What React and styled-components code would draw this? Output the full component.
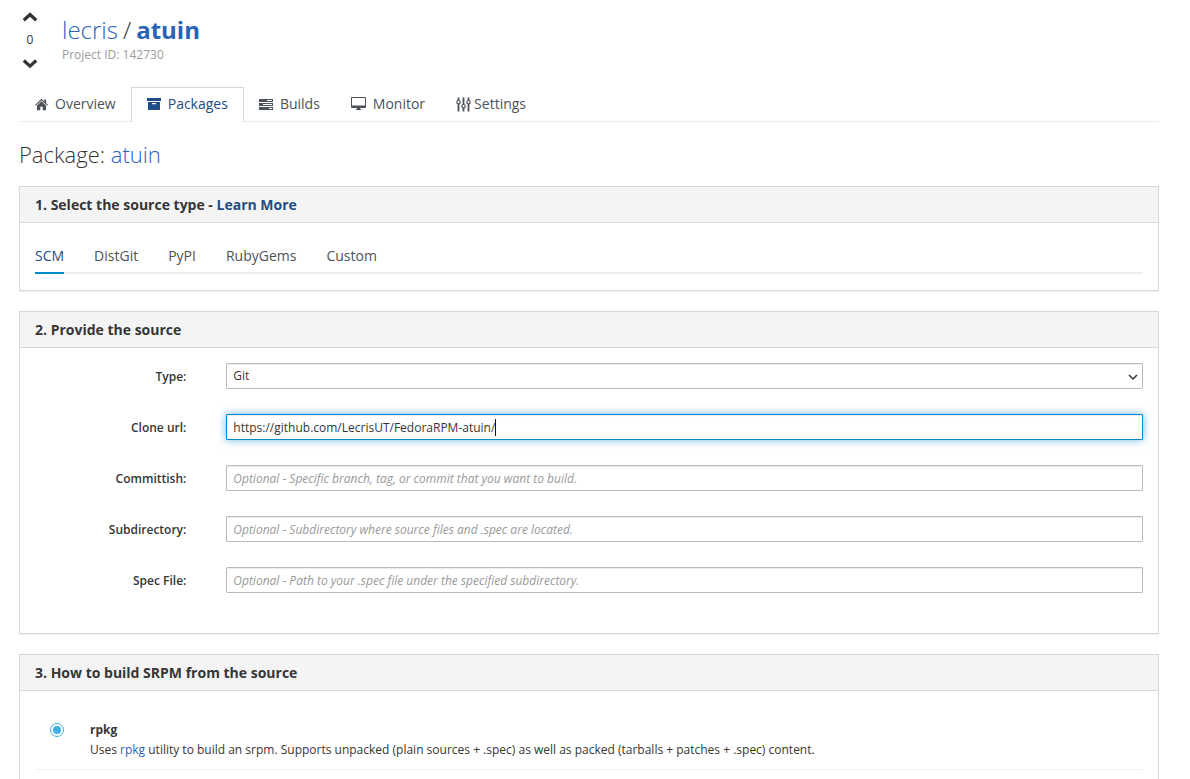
import React from 'react'
import styled, { createGlobalStyle, css } from 'styled-components'

const colors = {
    text: '#363636',
    muted: '#9c9c9c',
    tab: '#4d5258',
    link: '#2a62b8',
    active: '#204d88',
    accent: '#0088ce',
    border: '#d8d8d8',
    line: '#ededed',
}

const GlobalStyle = createGlobalStyle`
    * {
        box-sizing: border-box;
    }
    body {
        margin: 0;
        background: #fff;
        color: ${colors.text};
        font-family: 'Open Sans', 'Noto Sans', sans-serif;
        font-size: 12px;
        line-height: 20px;
    }
    a {
        color: ${colors.link};
        text-decoration: none;
        &:hover {
            text-decoration: underline;
        }
    }
`

const Page = styled.main`
    height: 100vh;
    overflow: hidden;
    padding: 10px 31px 0 19px;
`

const Header = styled.header`
    display: flex;
    gap: 24px;
    height: 77px;
    padding-left: 3px;
`

const Votes = styled.div`
    display: flex;
    flex-direction: column;
    align-items: center;
    width: 16px;
`

const VoteButton = styled.button`
    display: block;
    padding: 0;
    border: 0;
    background: none;
    color: #333;
    cursor: pointer;
    svg {
        display: block;
        width: 16px;
        height: 14px;
    }
`

const VoteCount = styled.span`
    padding: 6px 0;
`

const Title = styled.h1`
    display: flex;
    gap: 5px;
    margin: 4px 0 0;
    font-size: 24px;
    font-weight: 300;
    line-height: 32px;
    a:last-child {
        font-weight: 700;
    }
`

const ProjectId = styled.div`
    line-height: 18px;
    color: ${colors.muted};
`

const NavTabs = styled.nav`
    display: flex;
    border-bottom: 1px solid ${colors.line};
`

const NavTab = styled.a`
    display: flex;
    align-items: center;
    gap: ${({ $gap }) => $gap || 7}px;
    height: 35px;
    margin: 0 -1px -1px 0;
    padding: 0 15px 2px;
    border: 1px solid transparent;
    border-bottom: 0;
    color: ${colors.tab};
    font-size: 14px;
    svg {
        flex: none;
    }
    ${({ $active }) => $active && css`
        border-color: ${colors.border};
        background: #fff;
        color: ${colors.active};
    `}
`

const PackageTitle = styled.h2`
    margin: 17px 0;
    font-size: 22px;
    font-weight: 300;
    line-height: 30px;
`

const Panel = styled.section`
    margin-bottom: 20px;
    border: 1px solid ${colors.border};
    box-shadow: 0 1px 1px rgba(0, 0, 0, 0.05);
`

const PanelHeading = styled.h3`
    margin: 0;
    padding: 8px 15px 7px;
    border-bottom: 1px solid ${colors.border};
    background: #f4f4f4;
    font-size: 14px;
    font-weight: 700;
    line-height: 20px;
    a {
        color: ${colors.active};
    }
`

const SourceBody = styled.div`
    padding: 15px 15px 16px;
`

const SourceTabs = styled.nav`
    display: flex;
    gap: 30px;
    border-bottom: 2px solid ${colors.line};
`

const SourceTab = styled.a`
    margin-bottom: -2px;
    padding: 8px 0 6px;
    border-bottom: 2px solid ${({ $active }) => $active ? colors.accent : 'transparent'};
    color: ${({ $active }) => $active ? colors.active : colors.tab};
    font-size: 14px;
`

const Form = styled.form`
    padding: 15px;
`

const FormRow = styled.div`
    display: flex;
    margin: 0 -20px 25px;
`

const Label = styled.label`
    flex: 0 0 calc(100% / 6);
    padding: 4px 20px 2px;
    font-weight: 600;
    text-align: right;
`

const Field = styled.div`
    position: relative;
    flex: 1;
    padding: 0 20px;
`

const control = css`
    display: block;
    width: 100%;
    height: 26px;
    margin: 0;
    padding: 2px 6px;
    border: 1px solid #bbb;
    border-radius: 1px;
    outline: 0;
    background: #fff;
    box-shadow: inset 0 1px 1px rgba(3, 3, 3, 0.075);
    color: ${colors.text};
    font-family: inherit;
    font-size: 12px;
    line-height: 20px;
    &:focus {
        border-color: ${colors.accent};
        box-shadow: inset 0 1px 1px rgba(3, 3, 3, 0.075), 0 0 8px rgba(0, 136, 206, 0.6);
    }
`

const Input = styled.input`
    ${control}
    caret-color: transparent;
    &::placeholder {
        color: #999;
        font-style: italic;
        opacity: 1;
    }
`

// steady caret, placed after an invisible copy of the value
const Caret = styled.span`
    position: absolute;
    top: 5px;
    left: 27px;
    line-height: 17px;
    white-space: pre;
    visibility: hidden;
    pointer-events: none;
    border-right: 1px solid transparent;
    &::after {
        content: '';
        position: absolute;
        top: 0;
        left: 100%;
        width: 1px;
        height: 17px;
        background: #111;
        visibility: visible;
    }
`

const Select = styled.select`
    ${control}
    appearance: none;
`

const SelectArrow = styled.svg`
    position: absolute;
    top: 10px;
    right: 25px;
    pointer-events: none;
`

const BuildBody = styled.div`
    padding: 15px 15px 300px;
`

const Option = styled.div`
    display: flex;
    gap: 26px;
    padding: 14px 15px 9px;
    border-bottom: 1px solid #f1f1f1;
`

const Radio = styled.input`
    appearance: none;
    flex: none;
    width: 14px;
    height: 14px;
    margin: 3px 0;
    border: 1px solid #3daee9;
    border-radius: 50%;
    background: #fff;
    &:checked {
        padding: 2px;
        background: #3daee9 content-box;
    }
`

const OptionName = styled.label`
    display: block;
    font-weight: 700;
`

const Chevron = ({ down }) => (
    <svg viewBox="0 0 16 14">
        <path
            d={down ? 'M1.8 4.5 8 10.2l6.2-5.7' : 'M1.8 10.2 8 4.5l6.2 5.7'}
            fill="none"
            stroke="currentColor"
            strokeWidth="3.2"
        />
    </svg>
)

const HomeIcon = () => (
    <svg width="13" height="13" viewBox="0 0 13 13" fill="currentColor">
        <path d="M6.5.8 0 7l.7.8 5.8-5.4 5.8 5.4.7-.8-2-1.9V1.4H9.2v2z" />
        <path d="M6.5 3.3 2 7.5v4.7h3.3V8.7h2.4v3.5H11V7.5z" />
    </svg>
)

const PackageIcon = () => (
    <svg width="14" height="14" viewBox="0 0 14 14" fill="currentColor">
        <path d="M0 1h14v3H0z" />
        <path fillRule="evenodd" d="M1 5h12v8H1zM5 6v1.2h4V6z" />
    </svg>
)

const BuildsIcon = () => (
    <svg width="14" height="13" viewBox="0 0 14 13" fill="currentColor">
        <path fillRule="evenodd" d="M0 1h14v3H0zM8 2v1h5V2z" />
        <path fillRule="evenodd" d="M0 5h14v3H0zM4 6v1h9V6z" />
        <path fillRule="evenodd" d="M0 9h14v3H0zM10 10v1h3v-1z" />
    </svg>
)

const MonitorIcon = () => (
    <svg width="15" height="14" viewBox="0 0 15 14" fill="currentColor">
        <path fillRule="evenodd" d="M1 0h13q1 0 1 1v9q0 1-1 1H1q-1 0-1-1V1q0-1 1-1zM1 1v7.500h13V1z" />
        <path d="M6 11h3v1h1v1H5v-1h1z" />
    </svg>
)

const SettingsIcon = () => (
    <svg width="15" height="15" viewBox="0 0 15 15" fill="none" stroke="currentColor">
        <path strokeWidth="1.800" d="M2.500.5v3M2.500 7v7.500M7.500.5v7M7.500 11v3.500M12.500.5v3M12.500 7v7.500" />
        <g strokeWidth="1.200">
            <circle cx="2.500" cy="5.200" r="1.700" />
            <circle cx="7.500" cy="9.200" r="1.700" />
            <circle cx="12.500" cy="5.200" r="1.700" />
        </g>
    </svg>
)

const tabs = [
    { name: 'Overview', Icon: HomeIcon },
    { name: 'Packages', Icon: PackageIcon, active: true },
    { name: 'Builds', Icon: BuildsIcon },
    { name: 'Monitor', Icon: MonitorIcon },
    { name: 'Settings', Icon: SettingsIcon, gap: 3 },
]

const sources = ['SCM', 'DistGit', 'PyPI', 'RubyGems', 'Custom']

const fields = [
    { id: 'committish', label: 'Committish:', placeholder: 'Optional - Specific branch, tag, or commit that you want to build.' },
    { id: 'subdirectory', label: 'Subdirectory:', placeholder: 'Optional - Subdirectory where source files and .spec are located.' },
    { id: 'spec', label: 'Spec File:', placeholder: 'Optional - Path to your .spec file under the specified subdirectory.' },
]

const App = () => {
    const [cloneUrl, setCloneUrl] = React.useState('https://github.com/LecrisUT/FedoraRPM-atuin/')

    return (
        <>
            <GlobalStyle />
            <Page>
                <Header>
                    <Votes>
                        <VoteButton type="button" aria-label="Upvote"><Chevron /></VoteButton>
                        <VoteCount>0</VoteCount>
                        <VoteButton type="button" aria-label="Downvote"><Chevron down /></VoteButton>
                    </Votes>
                    <div>
                        <Title>
                            <a href="#owner">lecris</a>
                            <span>/</span>
                            <a href="#project">atuin</a>
                        </Title>
                        <ProjectId>Project ID: 142730</ProjectId>
                    </div>
                </Header>

                <NavTabs>
                    {tabs.map(({ name, Icon, active, gap }) => (
                        <NavTab key={name} href={'#' + name.toLowerCase()} $active={active} $gap={gap}>
                            <Icon />
                            {name}
                        </NavTab>
                    ))}
                </NavTabs>

                <PackageTitle>Package: <a href="#package">atuin</a></PackageTitle>

                <Panel>
                    <PanelHeading>
                        1. Select the source type - <a href="#docs">Learn More</a>
                    </PanelHeading>
                    <SourceBody>
                        <SourceTabs>
                            {sources.map((source, i) => (
                                <SourceTab key={source} href={'#' + source.toLowerCase()} $active={i === 0}>
                                    {source}
                                </SourceTab>
                            ))}
                        </SourceTabs>
                    </SourceBody>
                </Panel>

                <Panel>
                    <PanelHeading>2. Provide the source</PanelHeading>
                    <Form>
                        <FormRow>
                            <Label htmlFor="scm_type">Type:</Label>
                            <Field>
                                <Select id="scm_type" defaultValue="git">
                                    <option value="git">Git</option>
                                    <option value="svn">SVN</option>
                                </Select>
                                <SelectArrow width="10" height="8" viewBox="0 0 10 8">
                                    <path d="M1 2 5 6 9 2" fill="none" stroke="#333" strokeWidth="1.500" />
                                </SelectArrow>
                            </Field>
                        </FormRow>
                        <FormRow>
                            <Label htmlFor="clone_url">Clone url:</Label>
                            <Field>
                                <Input
                                    id="clone_url"
                                    type="text"
                                    value={cloneUrl}
                                    onChange={(e) => setCloneUrl(e.target.value)}
                                    autoFocus
                                />
                                <Caret aria-hidden="true">{cloneUrl}</Caret>
                            </Field>
                        </FormRow>
                        {fields.map(({ id, label, placeholder }) => (
                            <FormRow key={id}>
                                <Label htmlFor={id}>{label}</Label>
                                <Field>
                                    <Input id={id} type="text" placeholder={placeholder} />
                                </Field>
                            </FormRow>
                        ))}
                    </Form>
                </Panel>

                <Panel>
                    <PanelHeading>3. How to build SRPM from the source</PanelHeading>
                    <BuildBody>
                        <Option>
                            <Radio type="radio" id="rpkg" name="srpm_build_method" defaultChecked />
                            <div>
                                <OptionName htmlFor="rpkg">rpkg</OptionName>
                                Uses <a href="#rpkg-docs">rpkg</a> utility to build an srpm. Supports unpacked (plain sources + .spec) as well as packed (tarballs + patches + .spec) content.
                            </div>
                        </Option>
                    </BuildBody>
                </Panel>
            </Page>
        </>
    )
}

export default App
